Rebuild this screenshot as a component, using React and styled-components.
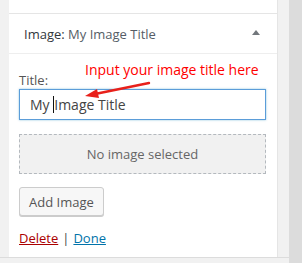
import React from 'react'
import styled, { createGlobalStyle } from 'styled-components'

const GlobalStyle = createGlobalStyle`
    html, body {
        margin: 0;
        padding: 0;
        background: #f1f1f1;
        font-family: "Open Sans", "Liberation Sans", sans-serif;
        font-size: 13px;
        color: #444;
    }
`

const App = () => {
    return (
        <Page>
            <GlobalStyle />
            <Main>
                <Row>
                    <Panel>
                        <PrevWidget />
                        <Header>
                            <Title>
                                Image: <InTitle>My Image Title</InTitle>
                            </Title>
                            <Toggle />
                        </Header>
                        <Body>
                            <LabelRow>
                                <Label>Title:</Label>
                                <Note>Input your image title here</Note>
                                <Arrow width="70" height="20" viewBox="0 0 70 20">
                                    <line x1="66" y1="2" x2="12" y2="13" stroke="#e8201a" strokeWidth="2.4" strokeLinecap="round" />
                                    <polygon points="2,15 14,8 16,17" fill="#e8201a" />
                                </Arrow>
                            </LabelRow>
                            <Field>
                                My <Caret />Image Title
                            </Field>
                            <Dropzone>No image selected</Dropzone>
                            <Button>Add Image</Button>
                            <Links>
                                <LinkA color="#a00">Delete</LinkA>
                                <Sep>|</Sep>
                                <LinkA color="#0073aa">Done</LinkA>
                            </Links>
                        </Body>
                    </Panel>
                </Row>
                <Footer />
            </Main>
            <Scrollbar />
        </Page>
    )
}

const Page = styled.div`
    display: flex;
    height: 263px;
    width: 302px;
    overflow: hidden;
`

const Main = styled.div`
    flex: 1;
    display: flex;
    flex-direction: column;
`

const Row = styled.div`
    flex: 1;
    display: flex;
    padding-left: 9px;
`

const Scrollbar = styled.div`
    width: 13px;
    background: #dcdcdc;
`

const Footer = styled.div`
    height: 5px;
    border-top: 1px solid #dcdcdc;
    background: #f1f1f1;
`

const Panel = styled.div`
    width: 268px;
    background: #fff;
    border-right: 1px solid #e5e5e5;
    display: flex;
    flex-direction: column;
`

const PrevWidget = styled.div`
    height: 13px;
    border-bottom: 1px solid #e5e5e5;
`

const Header = styled.div`
    height: 39px;
    display: flex;
    align-items: center;
    justify-content: space-between;
    padding: 0 17px 0 15px;
    border-bottom: 1px solid #eee;
`

const Title = styled.h3`
    margin: 0;
    font-size: 13px;
    font-weight: 400;
    color: #32373c;
`

const InTitle = styled.span`
    color: #555d66;
`

const Toggle = styled.span`
    width: 0;
    height: 0;
    border-left: 4px solid transparent;
    border-right: 4px solid transparent;
    border-bottom: 5px solid #72777c;
    margin-top: -2px;
`

const Body = styled.div`
    padding: 17px 10px 0;
`

const LabelRow = styled.div`
    position: relative;
    height: 18px;
`

const Label = styled.label`
    display: block;
    line-height: 18px;
    color: #555;
`

const Note = styled.span`
    position: absolute;
    left: 66px;
    top: -11px;
    color: #f00;
    font-size: 14px;
    white-space: nowrap;
`

const Arrow = styled.svg`
    position: absolute;
    left: 64px;
    top: 10px;
    overflow: visible;
`

const Field = styled.div`
    box-sizing: border-box;
    width: 247px;
    height: 31px;
    border: 1px solid #5b9dd9;
    box-shadow: 0 0 2px rgba(30, 140, 190, 0.5);
    padding: 0 10px;
    display: flex;
    align-items: center;
    white-space: pre;
    color: #444;
    font-size: 14px;
`

const Caret = styled.span`
    display: inline-block;
    width: 1px;
    height: 17px;
    background: #111;
`

const Dropzone = styled.div`
    box-sizing: border-box;
    width: 247px;
    height: 40px;
    margin-top: 14px;
    border: 1px dashed #b4b9be;
    background: #f1f1f1;
    color: #666;
    display: flex;
    align-items: center;
    justify-content: center;
`

const Button = styled.button`
    box-sizing: border-box;
    display: block;
    margin-top: 13px;
    width: 85px;
    height: 29px;
    border: 1px solid #ccc;
    border-radius: 3px;
    background: #f7f7f7;
    box-shadow: 0 1px 0 #ccc;
    color: #555;
    font-family: inherit;
    font-size: 13px;
    padding: 0;
`

const Links = styled.div`
    margin-top: 12px;
    line-height: 20px;
    display: flex;
    gap: 4px;
`

const LinkA = styled.a`
    color: ${(p) => p.color};
    text-decoration: underline;
    cursor: pointer;
`

const Sep = styled.span`
    color: #444;
`

export default App
